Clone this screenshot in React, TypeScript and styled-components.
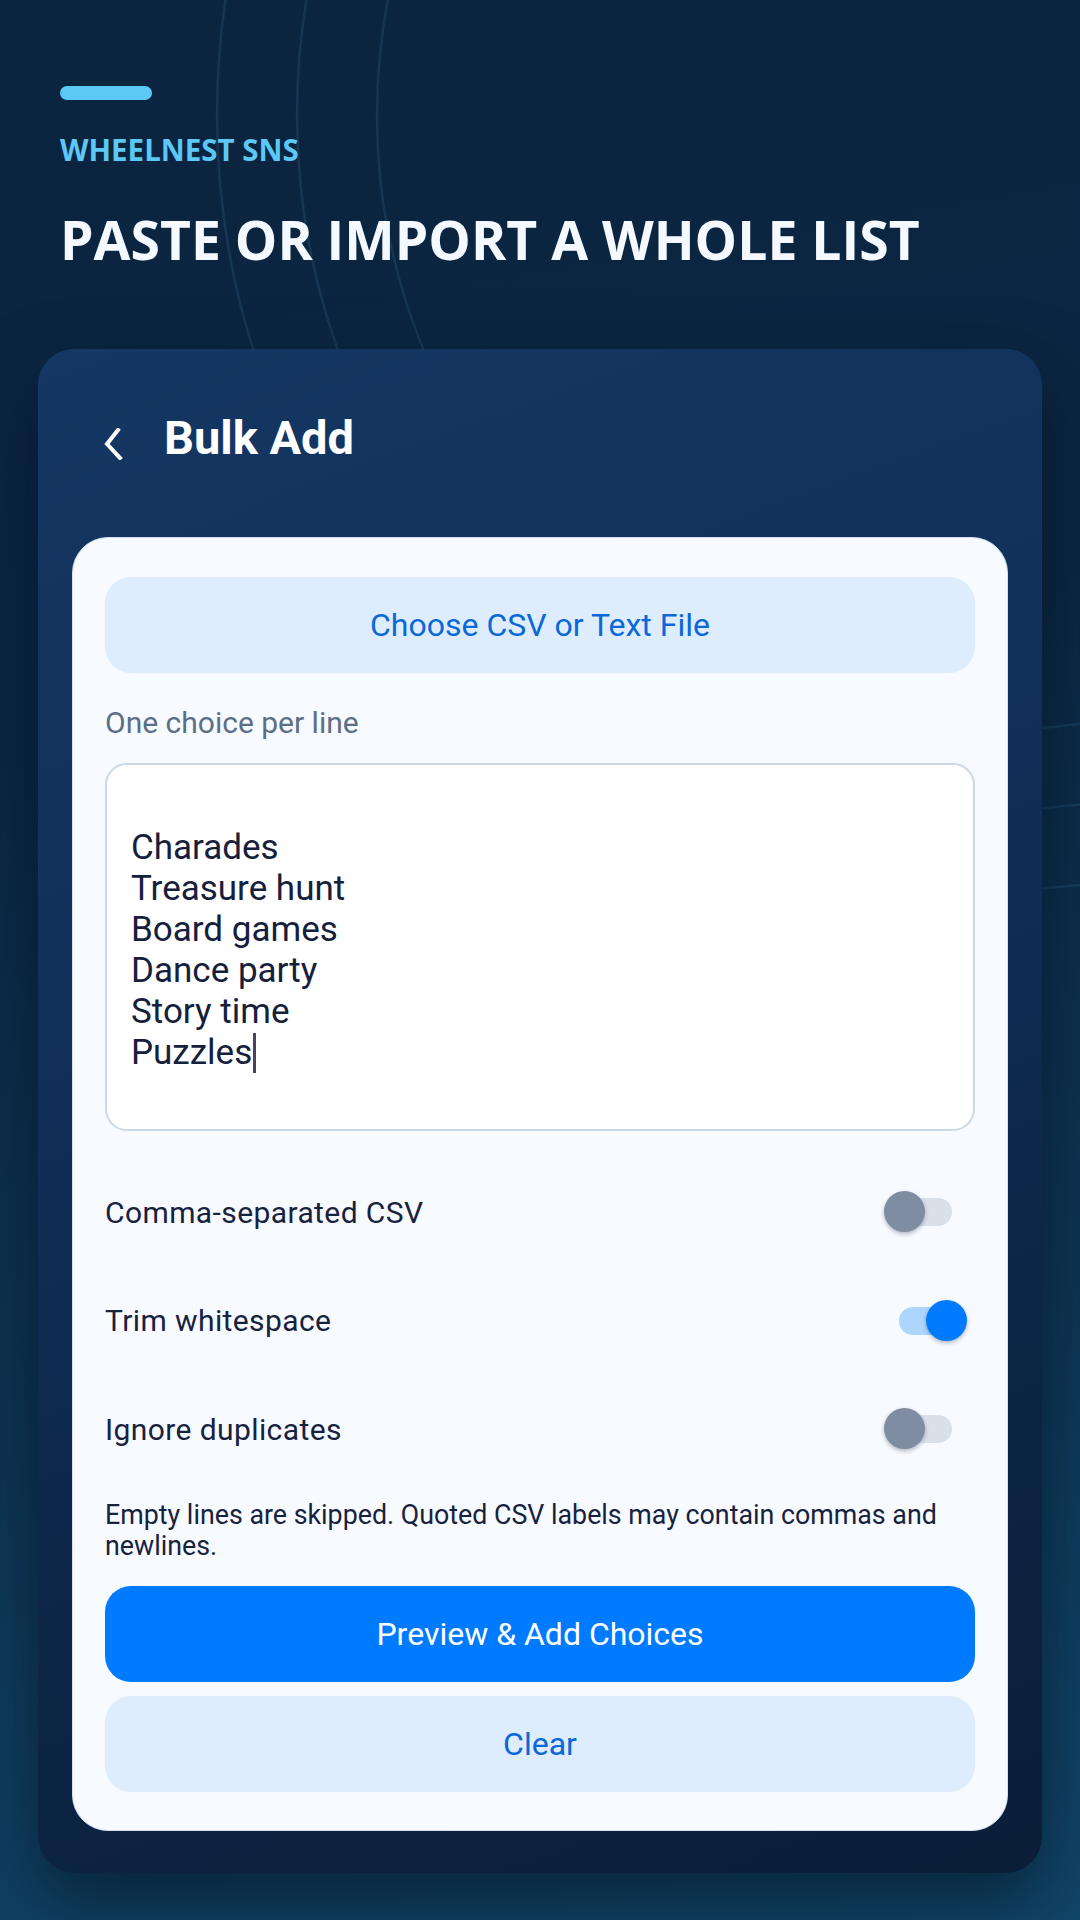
import React from "react";
import styled, { createGlobalStyle } from "styled-components";

const GlobalStyle = createGlobalStyle`
  html, body {
    margin: 0;
    padding: 0;
  }
  body {
    background: #0b2440;
    font-family: Roboto, "Noto Sans", "Liberation Sans", sans-serif;
  }
  * { box-sizing: border-box; }
`;

const Page = styled.div`
  position: relative;
  width: 1080px;
  height: 1920px;
  overflow: hidden;
  background: linear-gradient(170deg, #0b2440 0%, #0b2743 35%, #0e3656 70%, #114669 100%);
  display: flex;
  flex-direction: column;
`;

const Decor = styled.svg`
  position: absolute;
  left: 0;
  top: 0;
  width: 1080px;
  height: 1920px;
  pointer-events: none;
`;

const Hero = styled.header`
  position: relative;
  padding: 86px 60px 0;
  display: flex;
  flex-direction: column;
`;

const AccentBar = styled.div`
  width: 92px;
  height: 14px;
  border-radius: 7px;
  background: #5cc8f5;
`;

const Eyebrow = styled.div`
  margin-top: 30px;
  font-family: "Open Sans", "Noto Sans", sans-serif;
  font-weight: 700;
  font-size: 29.5px;
  line-height: 40px;
  color: #5cc8f5;
`;

const Title = styled.h1`
  margin: 38px 0 0;
  font-family: "Open Sans", "Noto Sans", sans-serif;
  font-weight: 700;
  font-size: 53.5px;
  line-height: 64px;
  color: #f4f8ff;
`;

const Panel = styled.section`
  position: relative;
  margin: 77px 38px 0;
  padding: 0 34px 42px;
  border-radius: 36px;
  background: linear-gradient(160deg, #143763 0%, #11305a 35%, #0c2444 75%, #0a1e37 100%);
  box-shadow: 0 30px 70px rgba(2, 12, 26, 0.55);
`;

const PanelHeader = styled.div`
  height: 188px;
  display: flex;
  align-items: center;
  padding-left: 30px;
  padding-bottom: 10px;
  gap: 40px;
`;

const BackButton = styled.button`
  width: 22px;
  height: 40px;
  padding: 0;
  border: none;
  background: transparent;
  display: flex;
  align-items: center;
  justify-content: center;
  margin-top: 12px;
`;

const HeaderTitle = styled.h2`
  margin: 0;
  font-family: Roboto, "Noto Sans", sans-serif;
  font-weight: 700;
  font-size: 47px;
  line-height: 56px;
  color: #ffffff;
`;

const Card = styled.div`
  background: #f7faff;
  border: 1px solid #d4dfeb;
  border-radius: 36px;
  padding: 39px 32px 38px;
  display: flex;
  flex-direction: column;
`;

const PillButton = styled.button<{ $variant: "soft" | "primary" }>`
  width: 100%;
  height: 96px;
  border: none;
  border-radius: 26px;
  font-family: Roboto, "Noto Sans", sans-serif;
  font-size: 32px;
  font-weight: 400;
  background: ${(p) => (p.$variant === "primary" ? "#007bff" : "#ddedfd")};
  color: ${(p) => (p.$variant === "primary" ? "#ffffff" : "#0a68d8")};
  display: flex;
  align-items: center;
  justify-content: center;
  cursor: pointer;
`;

const Hint = styled.div`
  margin-top: 35px;
  font-size: 30px;
  line-height: 30px;
  color: #5d6e87;
`;

const TextBox = styled.div`
  margin-top: 25px;
  height: 368px;
  background: #ffffff;
  border: 2px solid #cbd8e7;
  border-radius: 22px;
  padding: 21px 24px;
  font-size: 35px;
  line-height: 41px;
  color: #15203d;
  white-space: pre;
`;

const Line = styled.div`
  height: 41px;
`;

const Caret = styled.span`
  display: inline-block;
  width: 3px;
  height: 40px;
  margin-left: 1px;
  vertical-align: -9px;
  background: #4b4262;
`;

const Options = styled.div`
  margin-top: 27px;
  display: flex;
  flex-direction: column;
`;

const OptionRow = styled.label`
  height: 108.5px;
  display: flex;
  align-items: center;
  justify-content: space-between;
  padding-right: 8px;
`;

const OptionLabel = styled.span`
  font-size: 30px;
  color: #17223f;
  letter-spacing: 0.4px;
`;

const SwitchBox = styled.span`
  position: relative;
  width: 83px;
  height: 42px;
  display: inline-block;
`;

const Track = styled.span<{ $on: boolean }>`
  position: absolute;
  left: 15px;
  top: 7px;
  width: 53px;
  height: 28px;
  border-radius: 14px;
  background: ${(p) => (p.$on ? "#acd5ff" : "#d9e0ea")};
`;

const Thumb = styled.span<{ $on: boolean }>`
  position: absolute;
  top: 0;
  left: ${(p) => (p.$on ? "42px" : "0px")};
  width: 41px;
  height: 41px;
  border-radius: 50%;
  background: ${(p) => (p.$on ? "#007bff" : "#7f8da3")};
  box-shadow: 0 2px 4px rgba(20, 30, 50, 0.3);
`;

const Note = styled.p`
  margin: 16px 0 0;
  font-size: 26.8px;
  line-height: 31.5px;
  color: #17223f;
`;

const Actions = styled.div`
  margin-top: 23px;
  display: flex;
  flex-direction: column;
  gap: 14px;
`;

const choices = ["Charades", "Treasure hunt", "Board games", "Dance party", "Story time"];

function Switch({ on }: { on: boolean }) {
  return (
    <SwitchBox role="switch" aria-checked={on}>
      <Track $on={on} />
      <Thumb $on={on} />
    </SwitchBox>
  );
}

export default function App() {
  const options = [
    { label: "Comma-separated CSV", on: false },
    { label: "Trim whitespace", on: true },
    { label: "Ignore duplicates", on: false },
  ];
  return (
    <>
      <GlobalStyle />
      <Page>
        <Decor viewBox="0 0 1080 1920">
          {[775, 695, 615].map((r) => (
            <circle key={r} cx={992} cy={115} r={r} fill="none" stroke="rgba(92,170,220,0.13)" strokeWidth={2.5} />
          ))}
        </Decor>
        <Hero>
          <AccentBar />
          <Eyebrow>WHEELNEST SNS</Eyebrow>
          <Title>PASTE OR IMPORT A WHOLE LIST</Title>
        </Hero>
        <Panel>
          <PanelHeader>
            <BackButton aria-label="Back">
              <svg width="20" height="32" viewBox="0 0 20 32">
                <polyline points="15,2 4,16 17,30" fill="none" stroke="#ffffff" strokeWidth="4" strokeLinecap="square" strokeLinejoin="miter" />
              </svg>
            </BackButton>
            <HeaderTitle>Bulk Add</HeaderTitle>
          </PanelHeader>
          <Card>
            <PillButton $variant="soft">Choose CSV or Text File</PillButton>
            <Hint>One choice per line</Hint>
            <TextBox>
              <Line />
              {choices.map((c) => (
                <Line key={c}>{c}</Line>
              ))}
              <Line>
                Puzzles
                <Caret />
              </Line>
            </TextBox>
            <Options>
              {options.map((o) => (
                <OptionRow key={o.label}>
                  <OptionLabel>{o.label}</OptionLabel>
                  <Switch on={o.on} />
                </OptionRow>
              ))}
            </Options>
            <Note>Empty lines are skipped. Quoted CSV labels may contain commas and newlines.</Note>
            <Actions>
              <PillButton $variant="primary">Preview &amp; Add Choices</PillButton>
              <PillButton $variant="soft">Clear</PillButton>
            </Actions>
          </Card>
        </Panel>
      </Page>
    </>
  );
}
